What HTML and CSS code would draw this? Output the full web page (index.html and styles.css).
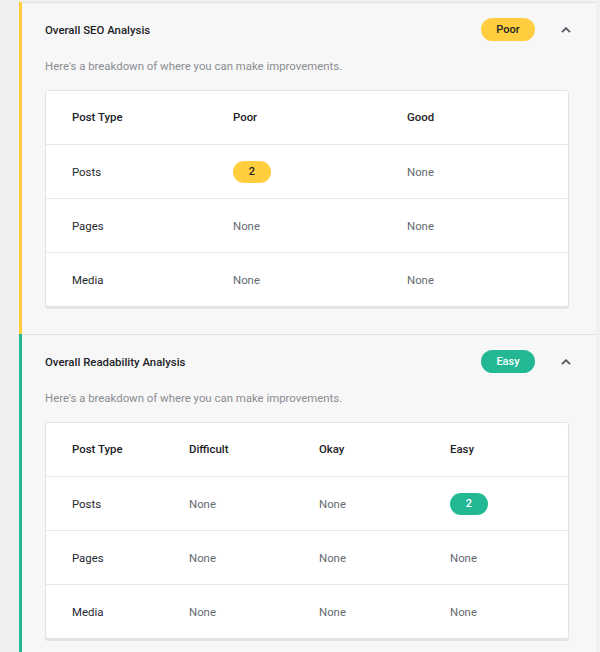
FILE: index.html
```html
<!DOCTYPE html>
<html lang="en">
    <head>
        <meta name="viewport" content="width=device-width, initial-scale=1">
        <link rel="stylesheet" href="styles.css">
        <title>Analysis</title>
    </head>
    <body>
        <div class="panels">
            <section class="analysis analysis-poor">
                <div class="analysis-head">
                    <h2>Overall SEO Analysis</h2>
                    <span class="pill pill-poor">Poor</span>
                    <span class="toggle">
                        <svg width="10" height="6" viewBox="0 0 10 6"><polyline points="1,5.2 5,1.2 9,5.2" fill="none" stroke="#50575e" stroke-width="1.8"/></svg>
                    </span>
                </div>
                <p class="analysis-desc">Here's a breakdown of where you can make improvements.</p>
                <div class="card cols-3">
                    <div class="row head">
                        <div class="cell">Post Type</div>
                        <div class="cell">Poor</div>
                        <div class="cell">Good</div>
                    </div>
                    <div class="row">
                        <div class="cell label">Posts</div>
                        <div class="cell"><span class="count count-poor">2</span></div>
                        <div class="cell">None</div>
                    </div>
                    <div class="row">
                        <div class="cell label">Pages</div>
                        <div class="cell">None</div>
                        <div class="cell">None</div>
                    </div>
                    <div class="row">
                        <div class="cell label">Media</div>
                        <div class="cell">None</div>
                        <div class="cell">None</div>
                    </div>
                </div>
            </section>
            <section class="analysis analysis-easy">
                <div class="analysis-head">
                    <h2>Overall Readability Analysis</h2>
                    <span class="pill pill-easy">Easy</span>
                    <span class="toggle">
                        <svg width="10" height="6" viewBox="0 0 10 6"><polyline points="1,5.2 5,1.2 9,5.2" fill="none" stroke="#50575e" stroke-width="1.8"/></svg>
                    </span>
                </div>
                <p class="analysis-desc">Here's a breakdown of where you can make improvements.</p>
                <div class="card cols-4">
                    <div class="row head">
                        <div class="cell">Post Type</div>
                        <div class="cell">Difficult</div>
                        <div class="cell">Okay</div>
                        <div class="cell">Easy</div>
                    </div>
                    <div class="row">
                        <div class="cell label">Posts</div>
                        <div class="cell">None</div>
                        <div class="cell">None</div>
                        <div class="cell"><span class="count count-easy">2</span></div>
                    </div>
                    <div class="row">
                        <div class="cell label">Pages</div>
                        <div class="cell">None</div>
                        <div class="cell">None</div>
                        <div class="cell">None</div>
                    </div>
                    <div class="row">
                        <div class="cell label">Media</div>
                        <div class="cell">None</div>
                        <div class="cell">None</div>
                        <div class="cell">None</div>
                    </div>
                </div>
            </section>
        </div>
    </body>
</html>
```

FILE: styles.css
```css
body {
    background: #f0f0f0;
    color: #23282d;
    font-family: Roboto, "Liberation Sans", Arial, sans-serif;
    font-size: 11.4px;
    margin: 0;
    padding: 2px 0 0 19px;
}

.panels {
    width: 577px;
}

.analysis {
    background: #f7f7f7;
    border-left: 3px solid #ffcd3e;
    box-shadow: inset 0 1px 0 #e3e3e3;
    box-sizing: border-box;
    padding: 16px 27px 27px 23px;
}

.analysis-easy {
    border-left-color: #22b894;
}

.analysis-head {
    align-items: center;
    display: flex;
    height: 23px;
}

.analysis-head h2 {
    color: #1d2327;
    flex: 1;
    font-size: 11.4px;
    font-weight: 500;
    margin: 0;
    padding-top: 1px;
}

.pill {
    border-radius: 12px;
    box-sizing: border-box;
    font-size: 11px;
    font-weight: 500;
    height: 23px;
    line-height: 23px;
    text-align: center;
    width: 54px;
}

.pill-poor {
    background: #ffcd3e;
    color: #1d2327;
}

.pill-easy {
    background: #22b894;
    color: #fff;
}

.toggle {
    display: flex;
    justify-content: center;
    margin: 0 -2px 0 26px;
    width: 10px;
}

.analysis-desc {
    color: #8a8d91;
    line-height: 20px;
    margin: 15px 0 14px;
}

.card {
    background: #fff;
    border: 1px solid #e2e2e2;
    border-radius: 3px;
    box-shadow: 0 2px 0 #e4e4e4;
}

.row {
    align-items: center;
    border-top: 1px solid #e8e8e8;
    display: grid;
    height: 53px;
}

.row:first-child {
    border-top: 0;
}

.row.head {
    padding-bottom: 2px;
    box-sizing: border-box;
}

.cols-3 .row {
    grid-template-columns: 161px 174px 1fr;
}

.cols-4 .row {
    grid-template-columns: 117px 130px 131px 1fr;
}

.cell {
    color: #666a6f;
    padding-left: 26px;
}

.row.head .cell {
    color: #1d2327;
    font-weight: 500;
}

.cell.label {
    color: #23282d;
}

.count {
    border-radius: 11px;
    display: inline-block;
    font-size: 11px;
    font-weight: 500;
    height: 22px;
    line-height: 22px;
    text-align: center;
    width: 38px;
}

.count-poor {
    background: #ffcd3e;
    color: #1d2327;
}

.count-easy {
    background: #22b894;
    color: #fff;
}
```
